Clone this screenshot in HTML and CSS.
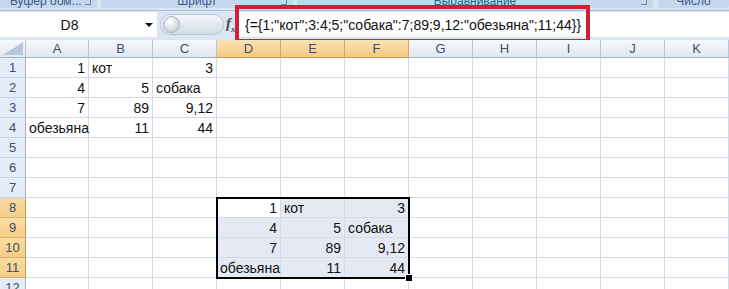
FILE: index.html
```html
<!DOCTYPE html>
<html lang="ru">
<head>
    <meta charset="UTF-8">
    <title>Массив констант</title>
    <link rel="stylesheet" href="styles.css">
</head>
<body>
<div class="app">
    <div class="ribbon">
        <div class="grp g1"><span>Буфер обм...</span><i class="launch"></i></div>
        <div class="grp g2"><span>Шрифт</span><i class="launch"></i></div>
        <div class="grp g3"><span>Выравнивание</span><i class="launch"></i></div>
        <div class="grp g4"><span>Число</span></div>
    </div>

    <div class="fbar">
        <div class="namebox"><span>D8</span><i class="arrow"></i></div>
        <div class="split">
            <div class="pill"><i class="knob"></i></div>
            <span class="fx">f<sub>x</sub></span>
        </div>
        <div class="formula">{={1;"кот";3:4;5;"собака":7;89;9,12:"обезьяна";11;44}}</div>
        <div class="mark"></div>
    </div>

    <div class="sheet">
        <div class="h corner"><i></i></div>
        <div class="h">A</div><div class="h">B</div><div class="h">C</div>
        <div class="h sel">D</div><div class="h sel">E</div><div class="h sel">F</div>
        <div class="h">G</div><div class="h">H</div><div class="h">I</div><div class="h">J</div><div class="h">K</div>

        <div class="r">1</div>
        <div class="c n">1</div><div class="c">кот</div><div class="c n">3</div>
        <div class="c"></div><div class="c"></div><div class="c"></div><div class="c"></div><div class="c"></div><div class="c"></div><div class="c"></div><div class="c"></div>

        <div class="r">2</div>
        <div class="c n">4</div><div class="c n">5</div><div class="c">собака</div>
        <div class="c"></div><div class="c"></div><div class="c"></div><div class="c"></div><div class="c"></div><div class="c"></div><div class="c"></div><div class="c"></div>

        <div class="r">3</div>
        <div class="c n">7</div><div class="c n">89</div><div class="c n">9,12</div>
        <div class="c"></div><div class="c"></div><div class="c"></div><div class="c"></div><div class="c"></div><div class="c"></div><div class="c"></div><div class="c"></div>

        <div class="r">4</div>
        <div class="c">обезьяна</div><div class="c n">11</div><div class="c n">44</div>
        <div class="c"></div><div class="c"></div><div class="c"></div><div class="c"></div><div class="c"></div><div class="c"></div><div class="c"></div><div class="c"></div>

        <div class="r">5</div>
        <div class="c"></div><div class="c"></div><div class="c"></div><div class="c"></div><div class="c"></div><div class="c"></div><div class="c"></div><div class="c"></div><div class="c"></div><div class="c"></div><div class="c"></div>

        <div class="r">6</div>
        <div class="c"></div><div class="c"></div><div class="c"></div><div class="c"></div><div class="c"></div><div class="c"></div><div class="c"></div><div class="c"></div><div class="c"></div><div class="c"></div><div class="c"></div>

        <div class="r">7</div>
        <div class="c"></div><div class="c"></div><div class="c"></div><div class="c"></div><div class="c"></div><div class="c"></div><div class="c"></div><div class="c"></div><div class="c"></div><div class="c"></div><div class="c"></div>

        <div class="r sel">8</div>
        <div class="c"></div><div class="c"></div><div class="c"></div>
        <div class="c n active">1</div><div class="c in">кот</div><div class="c n in">3</div>
        <div class="c"></div><div class="c"></div><div class="c"></div><div class="c"></div><div class="c"></div>

        <div class="r sel">9</div>
        <div class="c"></div><div class="c"></div><div class="c"></div>
        <div class="c n in">4</div><div class="c n in">5</div><div class="c in">собака</div>
        <div class="c"></div><div class="c"></div><div class="c"></div><div class="c"></div><div class="c"></div>

        <div class="r sel">10</div>
        <div class="c"></div><div class="c"></div><div class="c"></div>
        <div class="c n in">7</div><div class="c n in">89</div><div class="c n in">9,12</div>
        <div class="c"></div><div class="c"></div><div class="c"></div><div class="c"></div><div class="c"></div>

        <div class="r sel">11</div>
        <div class="c"></div><div class="c"></div><div class="c"></div>
        <div class="c in">обезьяна</div><div class="c n in">11</div><div class="c n in">44</div>
        <div class="c"></div><div class="c"></div><div class="c"></div><div class="c"></div><div class="c"></div>

        <div class="r">12</div>
        <div class="c"></div><div class="c"></div><div class="c"></div><div class="c"></div><div class="c"></div><div class="c"></div><div class="c"></div><div class="c"></div><div class="c"></div><div class="c"></div><div class="c"></div>

        <div class="range"><i class="handle"></i></div>
    </div>
</div>
</body>
</html>
```

FILE: styles.css
```css
body {
    margin: 0;
    font-family: "Liberation Sans", Arial, sans-serif;
    background: #fff;
    overflow: hidden;
}
.app {
    width: 729px;
    height: 289px;
    overflow: hidden;
    position: relative;
    background: #dbe6f4;
}

/* ribbon group captions (cut off at the top) */
.ribbon {
    display: flex;
    gap: 4px;
    height: 11px;
    box-sizing: border-box;
    border-bottom: 1px solid #aebfd6;
    background: #d9e5f3;
}
.grp {
    position: relative;
    height: 8px;
    overflow: hidden;
    background: #c4d7ef;
    border-radius: 0 0 3px 3px;
    font-size: 12px;
    line-height: 12px;
    color: #3d5a86;
    text-align: center;
}
.grp span {
    display: block;
    margin-top: -5px;
}
.g1 { width: 97px; }
.g2 { width: 192px; }
.g3 { width: 356px; }
.g4 { flex: 1; margin-left: 1px; }
.g1 span { text-align: left; padding-left: 10px; }
.launch {
    position: absolute;
    right: 6px;
    top: 0;
    width: 5px;
    height: 4px;
    border-right: 1px solid #6f86a8;
    border-bottom: 1px solid #6f86a8;
}

/* formula bar */
.fbar {
    display: flex;
    height: 29px;
    padding: 1px 0 3px;
    box-sizing: border-box;
    position: relative;
}
.namebox {
    width: 157px;
    background: #fff;
    display: flex;
    align-items: center;
    font-size: 14px;
    color: #111;
}
.namebox span {
    flex: 1;
    text-align: center;
    padding-left: 6px;
    padding-right: 12px;
}
.arrow {
    width: 0;
    height: 0;
    border-left: 4px solid transparent;
    border-right: 4px solid transparent;
    border-top: 4px solid #111;
    margin-right: 4px;
}
.split {
    width: 79px;
    display: flex;
    align-items: center;
    padding-left: 3px;
    box-sizing: border-box;
}
.pill {
    width: 64px;
    height: 21px;
    border-radius: 11px;
    background: linear-gradient(#f4f7fb, #d3dce8);
    border: 1px solid #b7c4d6;
    box-sizing: border-box;
    display: flex;
    align-items: center;
    padding-left: 2px;
}
.knob {
    width: 15px;
    height: 15px;
    border-radius: 50%;
    background: radial-gradient(circle at 40% 35%, #ffffff, #b9c3cf);
    border: 1px solid #a9b5c4;
}
.fx {
    font-family: "Liberation Serif", serif;
    font-style: italic;
    font-weight: bold;
    font-size: 15px;
    color: #4a4a4a;
    margin-left: 2px;
}
.fx sub {
    font-size: 9px;
}
.formula {
    flex: 1;
    background: #fff;
    display: flex;
    align-items: center;
    padding-left: 9px;
    font-size: 14px;
    color: #111;
    white-space: nowrap;
}
.mark {
    position: absolute;
    left: 235px;
    top: -6px;
    width: 355px;
    height: 38px;
    border: 4px solid #d21f33;
    box-sizing: border-box;
}

/* sheet */
.sheet {
    position: relative;
    display: grid;
    grid-template-columns: 26px 63px repeat(10, 64px);
    grid-template-rows: 18px;
    grid-auto-rows: 20px;
    background: #fff;
}
.h {
    background: linear-gradient(#f7f9fc, #e0e7f1);
    border-right: 1px solid #b8c6d9;
    border-bottom: 1px solid #9db3cc;
    box-sizing: border-box;
    font-size: 13px;
    line-height: 17px;
    color: #3e4e69;
    text-align: center;
}
.h.sel {
    background: linear-gradient(#fbe3b6, #f5c97f);
    border-right-color: #d9a75c;
    border-bottom-color: #c99a4f;
}
.corner {
    position: relative;
}
.corner i {
    position: absolute;
    right: 2px;
    bottom: 2px;
    width: 20px;
    height: 13px;
    background: linear-gradient(to bottom right, transparent 50%, #b7c6da 50%);
}
.r {
    background: #e4ecf7;
    border-right: 1px solid #9db3cc;
    border-bottom: 1px solid #c6d3e4;
    box-sizing: border-box;
    font-size: 13px;
    line-height: 20px;
    color: #3e4e69;
    text-align: center;
}
.r.sel {
    background: linear-gradient(#fadcA4, #f6cd85);
    border-bottom-color: #dcb06a;
    border-right-color: #c99a4f;
}
.c {
    border-right: 1px solid #d4dae6;
    border-bottom: 1px solid #d4dae6;
    box-sizing: border-box;
    padding: 0 3px 1px;
    display: flex;
    align-items: flex-end;
    font-size: 14px;
    line-height: 16px;
    color: #111;
    white-space: nowrap;
}
.c.n {
    justify-content: flex-end;
}
.c.in {
    background: #e5e9f4;
}
.range {
    position: absolute;
    left: 216px;
    top: 157px;
    width: 194px;
    height: 82px;
    border: 2px solid #000;
    box-sizing: border-box;
}
.handle {
    position: absolute;
    right: -5px;
    bottom: -5px;
    width: 6px;
    height: 6px;
    background: #000;
    border: 1px solid #fff;
}
```
